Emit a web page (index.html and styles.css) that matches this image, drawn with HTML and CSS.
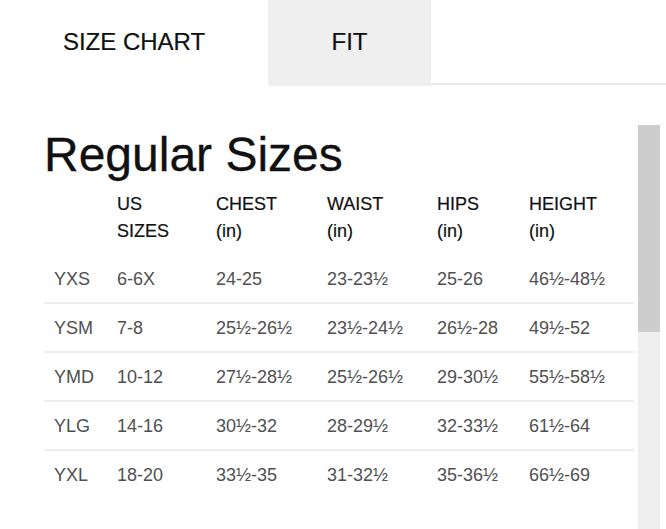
FILE: index.html
```html
<!DOCTYPE html>
<html lang="en">
<head>
<meta charset="utf-8">
<title>Size Chart</title>
<link rel="stylesheet" href="styles.css">
</head>
<body>
<div class="tabs">
  <div class="tab tab-active">SIZE CHART</div>
  <div class="tab tab-fit">FIT</div>
  <div class="tab-filler"></div>
</div>
<div class="panel">
  <div class="panel-inner">
    <h1 class="title">Regular Sizes</h1>
    <table class="chart">
      <colgroup>
        <col class="c1"><col class="c2"><col class="c3"><col class="c4"><col class="c5"><col class="c6">
      </colgroup>
      <thead>
        <tr>
          <th></th>
          <th>US<br>SIZES</th>
          <th>CHEST<br>(in)</th>
          <th>WAIST<br>(in)</th>
          <th>HIPS<br>(in)</th>
          <th>HEIGHT<br>(in)</th>
        </tr>
      </thead>
      <tbody>
        <tr><td>YXS</td><td>6-6X</td><td>24-25</td><td>23-23½</td><td>25-26</td><td>46½-48½</td></tr>
        <tr><td>YSM</td><td>7-8</td><td>25½-26½</td><td>23½-24½</td><td>26½-28</td><td>49½-52</td></tr>
        <tr><td>YMD</td><td>10-12</td><td>27½-28½</td><td>25½-26½</td><td>29-30½</td><td>55½-58½</td></tr>
        <tr><td>YLG</td><td>14-16</td><td>30½-32</td><td>28-29½</td><td>32-33½</td><td>61½-64</td></tr>
        <tr><td>YXL</td><td>18-20</td><td>33½-35</td><td>31-32½</td><td>35-36½</td><td>66½-69</td></tr>
      </tbody>
    </table>
  </div>
  <div class="scrollbar" aria-hidden="true">
    <div class="scrollbar-thumb"></div>
  </div>
</div>
</body>
</html>
```
FILE: styles.css
```css
html, body {
  margin: 0;
  padding: 0;
  background: #ffffff;
}
body {
  font-family: "Liberation Sans", Arial, sans-serif;
  color: #111111;
  overflow: hidden;
}
.tabs {
  display: flex;
  height: 86px;
}
.tab {
  height: 86px;
  line-height: 83px;
  font-size: 24px;
  text-align: center;
  color: #111111;
  -webkit-text-stroke: 0.2px #111111;
}
.tab-active {
  width: 268px;
  background: #ffffff;
}
.tab-fit {
  width: 163px;
  background: #efefef;
  border-bottom-left-radius: 2px;
}
.tab-filler {
  flex: 1;
  height: 85px;
  box-sizing: border-box;
  border-bottom: 2px solid #ededed;
}
.panel {
  margin-top: 39px;
  width: 660px;
  height: 404px;
  display: flex;
  overflow: hidden;
}
.panel-inner {
  flex: 1;
  padding: 2px 4px 0 44px;
  overflow: hidden;
}
.scrollbar {
  width: 22px;
  flex: none;
  background: #eeeeee;
}
.scrollbar-thumb {
  height: 207px;
  background: #cdcdcd;
}
.title {
  margin: 0;
  font-size: 48px;
  line-height: 56px;
  font-weight: normal;
  color: #111111;
  -webkit-text-stroke: 0.3px #111111;
}
.chart {
  margin-top: 8px;
  width: 590px;
  border-collapse: collapse;
  table-layout: fixed;
}
.c1 { width: 63px; }
.c2 { width: 99px; }
.c3 { width: 111px; }
.c4 { width: 110px; }
.c5 { width: 92px; }
.c6 { width: 115px; }
.chart th {
  text-align: left;
  font-weight: normal;
  font-size: 18px;
  line-height: 27px;
  padding: 0 0 10px 10px;
  color: #111111;
  vertical-align: top;
  -webkit-text-stroke: 0.2px #111111;
}
.chart td {
  font-size: 18px;
  line-height: 45px;
  padding: 2px 0 0 10px;
  color: #505050;
  border-bottom: 2px solid #eeeeee;
  white-space: nowrap;
}
.chart tbody tr:last-child td {
  border-bottom: none;
}
```
